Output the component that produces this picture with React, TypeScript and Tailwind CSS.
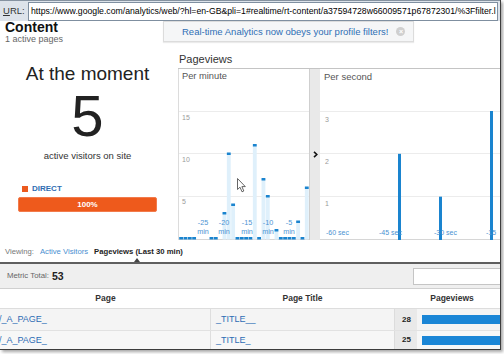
import React from "react";

const FONT = "'Liberation Sans', Arial, sans-serif";

const perMinute: (number | null)[] = [
  0, 0, 0, 0, null, null, null, 0, 0, null, 3, 10, 4, 0, 0, 0, 0, 11, 0, 7, 5, null, 1, 0, 0, 0, 0, 2, 0, 6,
];

function MinuteChart() {
  const W = 130;
  const H = 158;
  const base = 156.5;
  const unit = (base - 29) / 15;
  const slot = W / 30;
  const labels = [
    { x: 24, t: "-25" },
    { x: 45, t: "-20" },
    { x: 68, t: "-15" },
    { x: 89, t: "-10" },
    { x: 110, t: "-5" },
  ];
  return (
    <svg width={W} height={H} className="block" fontFamily={FONT}>
      {[29, 71, 114].map((y) => (
        <line key={y} x1={0} x2={W} y1={y + 0.5} y2={y + 0.5} stroke="#ececec" />
      ))}
      <line x1={0} x2={W} y1={157.5} y2={157.5} stroke="#d6d6d6" />
      <text x={3} y={38} fontSize={7} fill="#9a9a9a">15</text>
      <text x={3} y={80} fontSize={7} fill="#9a9a9a">10</text>
      <text x={3} y={122} fontSize={7} fill="#9a9a9a">5</text>
      {perMinute.map((v, i) => {
        if (v === null) return null;
        const x = i * slot + 0.2;
        const top = base - v * unit;
        return (
          <g key={i}>
            {v > 0 && <rect x={x} y={top} width={slot - 0.5} height={base + 1 - top} fill="#dff0fb" />}
            <rect x={x} y={v > 0 ? top - 1 : base - 1.5} width={slot - 0.5} height={2.5} fill="#1a84cf" />
          </g>
        );
      })}
      {labels.map((l) => (
        <g key={l.t}>
          <text x={l.x} y={143} fontSize={7.2} fill="#4b92d2" textAnchor="middle">{l.t}</text>
          <text x={l.x} y={152} fontSize={7.2} fill="#4b92d2" textAnchor="middle">min</text>
        </g>
      ))}
    </svg>
  );
}

function SecondChart() {
  const W = 180;
  const H = 158;
  const base = 157.5;
  const unit = (base - 29) / 3;
  const bars = [
    { x: 78, v: 2 },
    { x: 119, v: 1 },
    { x: 170, v: 3 },
  ];
  const labels = [
    { x: 6, t: "-60 sec" },
    { x: 59, t: "-45 sec" },
    { x: 114, t: "-30 sec" },
    { x: 166, t: "-15" },
  ];
  return (
    <svg width={W} height={H} className="block" fontFamily={FONT}>
      {[29, 71, 114].map((y) => (
        <line key={y} x1={0} x2={W} y1={y + 0.5} y2={y + 0.5} stroke="#ececec" />
      ))}
      <line x1={0} x2={W} y1={157.5} y2={157.5} stroke="#d6d6d6" />
      <text x={5} y={40} fontSize={7} fill="#9a9a9a">3</text>
      <text x={5} y={82} fontSize={7} fill="#9a9a9a">2</text>
      <text x={5} y={124} fontSize={7} fill="#9a9a9a">1</text>
      {bars.map((b) => (
        <rect key={b.x} x={b.x} y={base - b.v * unit} width={3} height={b.v * unit + 1} fill="#1a84cf" />
      ))}
      {labels.map((l) => (
        <text key={l.t} x={l.x} y={153} fontSize={7} fill="#4b92d2">{l.t}</text>
      ))}
    </svg>
  );
}

export default function App() {
  return (
    <div className="w-[504px] h-[354px] bg-white overflow-hidden font-['Liberation_Sans',Arial,sans-serif]">
      <div className="w-[501px] h-[350px] border-r border-b border-[#3d3d3d] shadow-[2px_2px_3px_rgba(0,0,0,0.35)] overflow-hidden flex flex-col bg-white">
        {/* URL bar */}
        <div className="relative z-10 h-[21px] shrink-0 flex items-center gap-[3px] bg-[#dde3ea] border-t border-[#8592a0] pl-[3px] pr-[2px]">
          <span className="text-[9.5px] text-[#333] leading-none w-[22px] shrink-0">
            <span className="underline">U</span>RL:
          </span>
          <div className="flex-1 h-[19px] bg-white border border-[#7f8fa0] flex items-center px-[2px] overflow-hidden whitespace-nowrap text-[8.7px] text-black leading-none">
            https://www.google.com/analytics/web/?hl=en-GB&amp;pli=1#realtime/rt-content/a37594728w66009571p67872301/%3Ffilter.l
          </div>
        </div>

        {/* Header */}
        <div className="h-[26px] shrink-0 flex">
          <div className="w-[163px] shrink-0 pl-[5px]">
            <div className="text-[14px] font-bold text-[#111] leading-[16px] -mt-[2px]">Content</div>
            <div className="text-[9px] text-[#666] leading-[11px] -mt-[1px]">1 active pages</div>
          </div>
          <div className="w-[251px] h-[21px] shrink-0 bg-[#f5f6f7] border border-[#dcdcdc] shadow-[0_1px_1px_rgba(0,0,0,0.08)] flex items-center pl-[18px] text-[9.5px] leading-none text-[#2f6fb5]">
            <span>Real-time Analytics now obeys your profile filters!</span>
            <span className="ml-[8px] w-[9px] h-[9px] rounded-full bg-[#cfcfcf] text-white text-[7px] leading-[9px] text-center font-bold">
              ×
            </span>
          </div>
        </div>

        {/* Main row */}
        <div className="h-[193px] shrink-0 flex">
          <div className="w-[178px] shrink-0 flex flex-col items-center pt-[16px] pr-[3px]">
            <div className="text-[19px] leading-[22px] text-[#222]">At the moment</div>
            <div className="text-[58px] leading-[58px] mt-[2px] text-[#222]">5</div>
            <div className="text-[9.5px] leading-[12px] mt-[5px] text-[#333]">active visitors on site</div>
            <div className="self-stretch flex items-center gap-[4px] pl-[22px] mt-[22px] h-[10px]">
              <span className="w-[6px] h-[6px] bg-[#ec5a1e]" />
              <span className="text-[8px] font-bold leading-[10px] text-[#2e6db2]">DIRECT</span>
            </div>
            <div className="self-start ml-[18px] mt-[3px] w-[139px] h-[15px] rounded-[2px] bg-[#ee5a1c] border border-[#f27b4c] flex items-center justify-center text-[8px] font-bold text-white leading-none">
              100%
            </div>
          </div>

          <div className="flex-1 flex flex-col">
            <div className="h-[22px] shrink-0 border-b border-[#c4c4c4] pl-[1px] pt-[5px] text-[11px] leading-[14px] text-[#333]">
              Pageviews
            </div>
            <div className="flex-1 flex border-l border-[#dcdcdc] relative">
              <div className="w-[130px] shrink-0 flex flex-col">
                <div className="h-[13px] pt-[2px] pl-[3px] text-[9.3px] leading-[11px] text-[#555]">Per minute</div>
                <MinuteChart />
              </div>
              <div className="w-[11px] shrink-0 bg-[#e9e9e9] border-l border-[#cfcfcf] flex items-center justify-center">
                <svg width="5" height="7" viewBox="0 0 5 7">
                  <path d="M1 0.8 L3.8 3.5 L1 6.2" stroke="#111" strokeWidth="1.6" fill="none" />
                </svg>
              </div>
              <div className="flex-1 flex flex-col">
                <div className="h-[13px] pt-[2px] pl-[4px] text-[9.5px] leading-[11px] text-[#555]">Per second</div>
                <SecondChart />
              </div>
              <svg className="absolute left-[58px] top-[109px]" width="10" height="15" viewBox="0 0 10 15">
                <path d="M0.5 0.5 L0.5 11.5 L3 9.2 L5 13.8 L6.8 13 L4.9 8.6 L8.3 8.6 Z" fill="#fff" stroke="#555" strokeWidth="0.9" strokeLinejoin="round" />
              </svg>
            </div>
          </div>
        </div>

        {/* Viewing row */}
        <div className="h-[22px] shrink-0 flex items-start pt-[7px] pl-[5px] gap-[6px] text-[7.7px] leading-[10px]">
          <span className="text-[#777]">Viewing:</span>
          <span className="text-[#4a8fd0]">Active Visitors</span>
          <span className="relative font-bold text-[#222]">
            Pageviews (Last 30 min)
            <span className="absolute left-[40px] top-[11px] w-0 h-0 border-l-[3.5px] border-r-[3.5px] border-b-[4px] border-l-transparent border-r-transparent border-b-[#444]" />
          </span>
        </div>
        <div className="h-[2px] shrink-0 bg-[#5f5f5f]" />

        {/* Metric total */}
        <div className="h-[25px] shrink-0 bg-[#efefef] border-b border-[#d0d0d0] flex items-center pl-[7px] overflow-hidden">
          <span className="text-[7.8px] text-[#666] leading-none">Metric Total:</span>
          <span className="ml-[3px] text-[10.5px] font-bold text-[#222] leading-none">53</span>
          <div className="ml-auto -mr-[3px] w-[90px] h-[17px] bg-white border border-[#c5c5c5]" />
        </div>

        {/* Table header */}
        <div className="h-[20px] shrink-0 grid grid-cols-[211px_183px_106px] border-b border-[#dddddd] text-[8.5px] font-bold text-[#333] leading-none items-center">
          <div className="text-center">Page</div>
          <div className="text-center">Page Title</div>
          <div className="text-center pl-[10px]">Pageviews</div>
        </div>

        {/* Rows */}
        {[
          { page: "/_A_PAGE_", title: "_TITLE__", n: "28", bg: "bg-[#f4f4f4]", h: "h-[22px]", border: "border-b border-[#e2e2e2]" },
          { page: "/_A_PAGE_", title: "_TITLE_", n: "25", bg: "bg-[#f7f7f7]", h: "h-[18px]", border: "" },
        ].map((r, i) => (
          <div key={i} className={`${r.h} ${r.bg} ${r.border} shrink-0 grid grid-cols-[211px_183px_23px_83px] text-[9px] leading-none`}>
            <div className="flex items-center border-r border-[#dedede] text-[#2d6db5] -ml-[1px]">{r.page}</div>
            <div className="flex items-center pl-[5px] text-[#2d6db5]">{r.title}</div>
            <div className="flex items-center justify-end pr-[6px] bg-[#e9e9e9] border-l border-[#dcdcdc] text-[8px] font-bold text-[#222]">{r.n}</div>
            <div className="flex items-center pl-[5px]">
              <div className="w-full h-[9px] bg-[#1b86d6]" />
            </div>
          </div>
        ))}
      </div>
    </div>
  );
}
